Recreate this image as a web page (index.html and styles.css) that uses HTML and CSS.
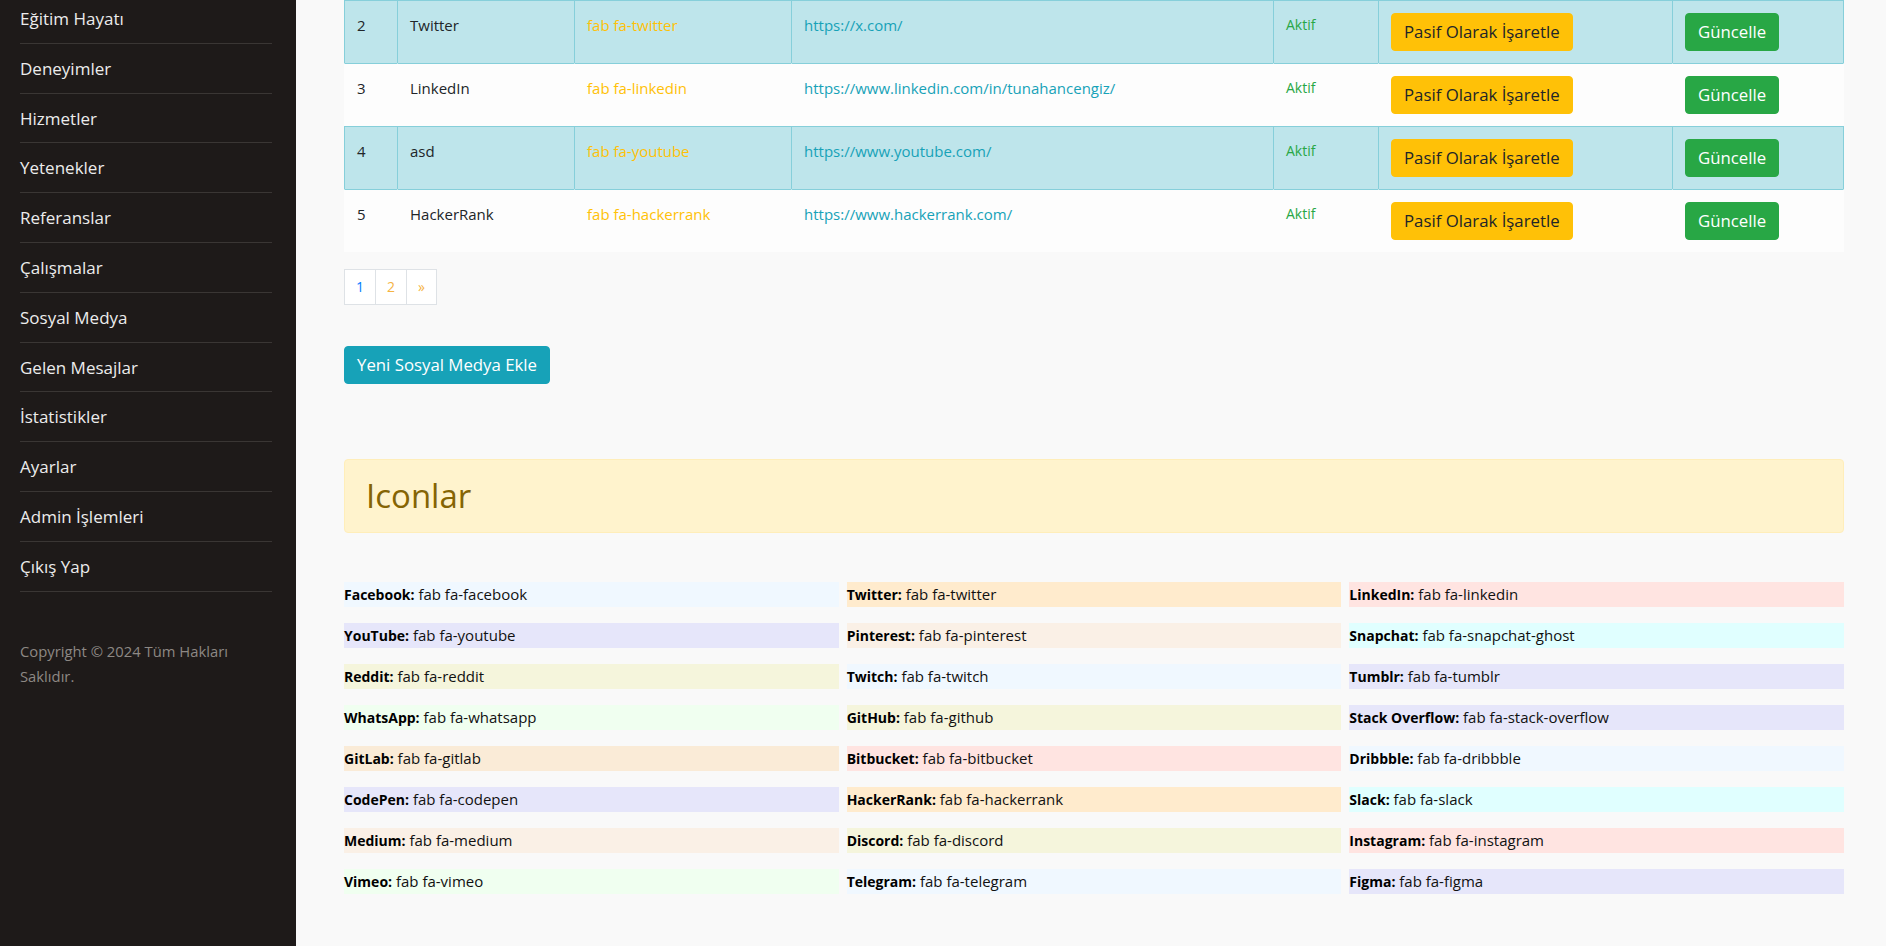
FILE: index.html
```html
<!DOCTYPE html>
<html lang="tr">
<head>
<meta charset="utf-8">
<title>Sosyal Medya</title>
<link rel="stylesheet" href="styles.css">
</head>
<body>
<div class="layout">
  <aside class="sidebar">
    <nav class="nav">
      <a class="nav-item" href="#">Eğitim Hayatı</a>
      <a class="nav-item" href="#">Deneyimler</a>
      <a class="nav-item" href="#">Hizmetler</a>
      <a class="nav-item" href="#">Yetenekler</a>
      <a class="nav-item" href="#">Referanslar</a>
      <a class="nav-item" href="#">Çalışmalar</a>
      <a class="nav-item" href="#">Sosyal Medya</a>
      <a class="nav-item" href="#">Gelen Mesajlar</a>
      <a class="nav-item" href="#">İstatistikler</a>
      <a class="nav-item" href="#">Ayarlar</a>
      <a class="nav-item" href="#">Admin İşlemleri</a>
      <a class="nav-item" href="#">Çıkış Yap</a>
    </nav>
    <p class="copyright">Copyright © 2024 Tüm Hakları Saklıdır.</p>
  </aside>

  <main class="main">
    <table class="table">
      <colgroup>
        <col class="c-id"><col class="c-name"><col class="c-icon"><col class="c-url"><col class="c-status"><col class="c-toggle"><col class="c-update">
      </colgroup>
      <tbody>
        <tr class="row-info">
          <td>2</td><td>Twitter</td><td class="t-warning">fab fa-twitter</td><td class="t-info">https://x.com/</td><td class="t-success">Aktif</td>
          <td><button class="btn btn-warning">Pasif Olarak İşaretle</button></td><td><button class="btn btn-success">Güncelle</button></td>
        </tr>
        <tr class="row-plain">
          <td>3</td><td>LinkedIn</td><td class="t-warning">fab fa-linkedin</td><td class="t-info">https://www.linkedin.com/in/tunahancengiz/</td><td class="t-success">Aktif</td>
          <td><button class="btn btn-warning">Pasif Olarak İşaretle</button></td><td><button class="btn btn-success">Güncelle</button></td>
        </tr>
        <tr class="row-info">
          <td>4</td><td>asd</td><td class="t-warning">fab fa-youtube</td><td class="t-info">https://www.youtube.com/</td><td class="t-success">Aktif</td>
          <td><button class="btn btn-warning">Pasif Olarak İşaretle</button></td><td><button class="btn btn-success">Güncelle</button></td>
        </tr>
        <tr class="row-plain">
          <td>5</td><td>HackerRank</td><td class="t-warning">fab fa-hackerrank</td><td class="t-info">https://www.hackerrank.com/</td><td class="t-success">Aktif</td>
          <td><button class="btn btn-warning">Pasif Olarak İşaretle</button></td><td><button class="btn btn-success">Güncelle</button></td>
        </tr>
      </tbody>
    </table>

    <ul class="pagination">
      <li class="page-item"><a class="page-link page-current" href="#">1</a></li>
      <li class="page-item"><a class="page-link" href="#">2</a></li>
      <li class="page-item"><a class="page-link" href="#">»</a></li>
    </ul>

    <div class="actions">
      <button class="btn btn-info">Yeni Sosyal Medya Ekle</button>
    </div>

    <div class="alert">Iconlar</div>

    <div class="icon-grid">
      <div class="icon-row bg-aliceblue"><b>Facebook:</b> fab fa-facebook</div>
      <div class="icon-row bg-almond"><b>Twitter:</b> fab fa-twitter</div>
      <div class="icon-row bg-mistyrose"><b>LinkedIn:</b> fab fa-linkedin</div>

      <div class="icon-row bg-lavender"><b>YouTube:</b> fab fa-youtube</div>
      <div class="icon-row bg-linen"><b>Pinterest:</b> fab fa-pinterest</div>
      <div class="icon-row bg-lightcyan"><b>Snapchat:</b> fab fa-snapchat-ghost</div>

      <div class="icon-row bg-beige"><b>Reddit:</b> fab fa-reddit</div>
      <div class="icon-row bg-aliceblue"><b>Twitch:</b> fab fa-twitch</div>
      <div class="icon-row bg-lavender"><b>Tumblr:</b> fab fa-tumblr</div>

      <div class="icon-row bg-honeydew"><b>WhatsApp:</b> fab fa-whatsapp</div>
      <div class="icon-row bg-beige"><b>GitHub:</b> fab fa-github</div>
      <div class="icon-row bg-lavender"><b>Stack Overflow:</b> fab fa-stack-overflow</div>

      <div class="icon-row bg-antiquewhite"><b>GitLab:</b> fab fa-gitlab</div>
      <div class="icon-row bg-mistyrose"><b>Bitbucket:</b> fab fa-bitbucket</div>
      <div class="icon-row bg-aliceblue"><b>Dribbble:</b> fab fa-dribbble</div>

      <div class="icon-row bg-lavender"><b>CodePen:</b> fab fa-codepen</div>
      <div class="icon-row bg-almond"><b>HackerRank:</b> fab fa-hackerrank</div>
      <div class="icon-row bg-lightcyan"><b>Slack:</b> fab fa-slack</div>

      <div class="icon-row bg-linen"><b>Medium:</b> fab fa-medium</div>
      <div class="icon-row bg-beige"><b>Discord:</b> fab fa-discord</div>
      <div class="icon-row bg-mistyrose"><b>Instagram:</b> fab fa-instagram</div>

      <div class="icon-row bg-honeydew"><b>Vimeo:</b> fab fa-vimeo</div>
      <div class="icon-row bg-aliceblue"><b>Telegram:</b> fab fa-telegram</div>
      <div class="icon-row bg-lavender"><b>Figma:</b> fab fa-figma</div>
    </div>
  </main>
</div>
</body>
</html>
```
FILE: styles.css
```css
* { box-sizing: border-box; }

html, body {
  margin: 0;
  height: 100%;
  overflow: hidden;
}

body {
  font-family: "Open Sans", "Noto Sans", "DejaVu Sans", sans-serif;
  color: #212529;
  background: #f9f9f9;
}

.layout {
  display: flex;
  height: 100vh;
}

/* ---------- Sidebar ---------- */
.sidebar {
  width: 296px;
  flex: 0 0 296px;
  background: #1e1a19;
  padding: 0 24px 0 20px;
}

.nav {
  display: flex;
  flex-direction: column;
  margin-top: -6px;
}

.nav-item {
  display: block;
  color: #ececec;
  text-decoration: none;
  font-size: 17px;
  line-height: 25px;
  padding: 12px 0;
  border-bottom: 1px solid #3a3634;
  height: 49.8px;
}

.copyright {
  margin: 47px 0 0;
  color: #8d8884;
  font-size: 14.8px;
  line-height: 25px;
}

/* ---------- Main ---------- */
.main {
  flex: 1;
  padding: 0 42px 0 48px;
  min-width: 0;
}

.table {
  width: 1500px;
  table-layout: fixed;
  border-collapse: separate;
  border-spacing: 0;
  margin: 0 0 17px;
  font-size: 15px;
  line-height: 24px;
}

.c-id { width: 53px; }
.c-name { width: 177px; }
.c-icon { width: 217px; }
.c-url { width: 482px; }
.c-status { width: 105px; }
.c-toggle { width: 294px; }
.c-update { width: 172px; }

.table td {
  padding: 12px;
  vertical-align: top;
  border-top: 1px solid #86cfda;
  border-left: 1px solid transparent;
  white-space: nowrap;
}

.row-info td {
  background: #bee5eb;
  border-left-color: #86cfda;
}

.row-info td:last-child {
  border-right: 1px solid #86cfda;
}

.row-plain td {
  background: #fdfdfd;
}

.row-plain td:last-child {
  border-right: 1px solid transparent;
}

.t-warning { color: #ffc107; }
.t-info { color: #17a2b8; }
.t-success { color: #28a745; font-size: 14px; }

.btn {
  display: inline-block;
  font-family: inherit;
  font-size: 16.8px;
  line-height: 24px;
  padding: 6px 12px;
  border: 1px solid transparent;
  border-radius: 4px;
  cursor: pointer;
  white-space: nowrap;
}

.btn-warning {
  background: #ffc107;
  border-color: #ffc107;
  color: #212529;
}

.btn-success {
  background: #28a745;
  border-color: #28a745;
  color: #fff;
}

.btn-info {
  background: #17a2b8;
  border-color: #17a2b8;
  color: #fff;
}

/* ---------- Pagination ---------- */
.pagination {
  display: flex;
  list-style: none;
  margin: 0;
  padding: 0;
}

.page-link {
  display: block;
  font-size: 14px;
  line-height: 17.5px;
  padding: 8px 11px;
  background: #fff;
  border: 1px solid #dee2e6;
  margin-left: -1px;
  color: #f5b342;
  text-decoration: none;
}

.page-item:first-child .page-link {
  margin-left: 0;
}

.page-current {
  color: #007bff;
}

.actions {
  margin-top: 41px;
}

/* ---------- Alert ---------- */
.alert {
  margin-top: 75px;
  background: #fff3cd;
  border: 1px solid #ffeeba;
  border-radius: 4px;
  color: #856404;
  font-size: 33px;
  line-height: 40px;
  padding: 16px 21px;
}

/* ---------- Icon grid ---------- */
.icon-grid {
  margin-top: 49px;
  display: grid;
  grid-template-columns: repeat(3, 1fr);
  column-gap: 8px;
  row-gap: 16px;
}

.icon-row {
  height: 25px;
  line-height: 25px;
  font-size: 15px;
  color: #111;
  white-space: nowrap;
}

.icon-row b {
  font-size: 14px;
  font-weight: 700;
  color: #000;
}

.bg-aliceblue { background: #f0f8ff; }
.bg-almond { background: #ffebcd; }
.bg-mistyrose { background: #ffe4e1; }
.bg-lavender { background: #e6e6fa; }
.bg-linen { background: #faf0e6; }
.bg-lightcyan { background: #e0ffff; }
.bg-beige { background: #f5f5dc; }
.bg-honeydew { background: #f0fff0; }
.bg-antiquewhite { background: #faebd7; }
```
